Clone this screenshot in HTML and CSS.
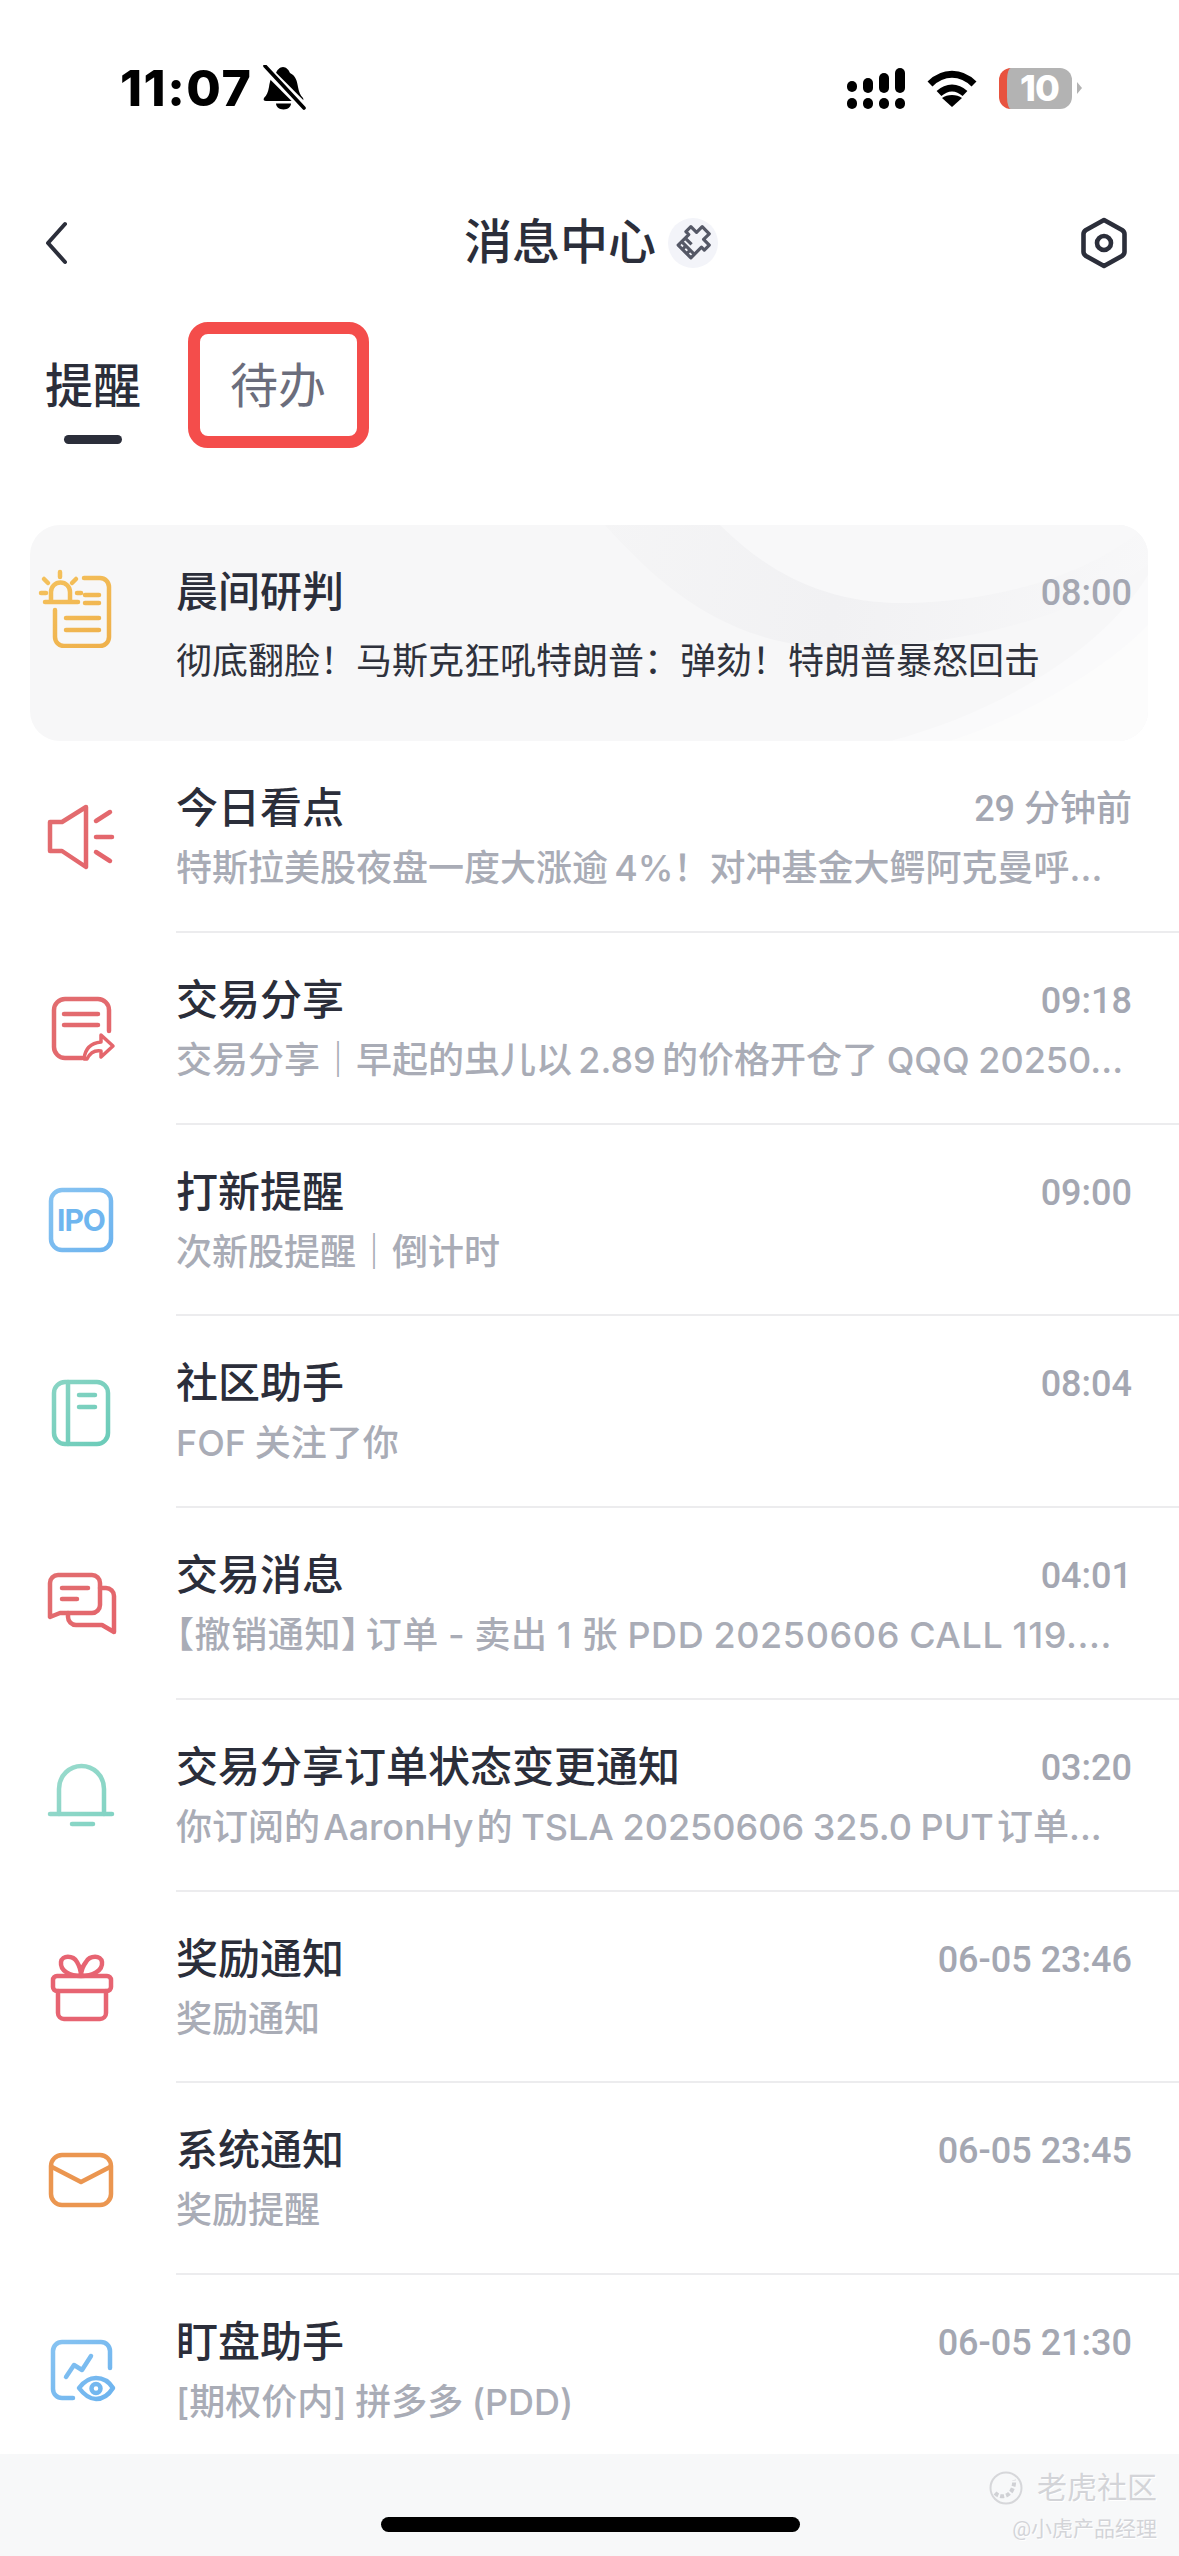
FILE: index.html
```html
<!DOCTYPE html>
<html lang="zh-CN">
<head>
<meta charset="utf-8">
<title>消息中心</title>
<link rel="stylesheet" href="styles.css">
</head>
<body>
<svg class="defs" width="0" height="0" aria-hidden="true">
  <defs>
    <linearGradient id="gAmber" gradientUnits="userSpaceOnUse" x1="0" y1="0" x2="60" y2="80"><stop offset="0" stop-color="#f5c35e"/><stop offset="1" stop-color="#efb14c"/></linearGradient>
    <linearGradient id="gRed" gradientUnits="userSpaceOnUse" x1="0" y1="0" x2="80" y2="80"><stop offset="0" stop-color="#e16f70"/><stop offset="1" stop-color="#e5636b"/></linearGradient>
    <linearGradient id="gBlue" gradientUnits="userSpaceOnUse" x1="0" y1="0" x2="80" y2="80"><stop offset="0" stop-color="#8cc6f2"/><stop offset="1" stop-color="#69b1ee"/></linearGradient>
    <linearGradient id="gTeal" gradientUnits="userSpaceOnUse" x1="0" y1="0" x2="80" y2="80"><stop offset="0" stop-color="#8ed6c6"/><stop offset="1" stop-color="#66cab7"/></linearGradient>
    <linearGradient id="gWave" gradientUnits="userSpaceOnUse" x1="560" y1="0" x2="1118" y2="100"><stop offset="0" stop-color="#f5f5f6"/><stop offset=".45" stop-color="#f1f1f3"/><stop offset="1" stop-color="#f8f8f9"/></linearGradient>
  </defs>
</svg>
<div class="app">
  <div class="status">
    <div class="status-left">
      <span class="clock">11:07</span>
      <svg class="bell-off" width="44" height="46" viewBox="0 0 44 46">
        <path d="M21 2c3 0 6 3 7 6 6 3 7 8 8 14 1 5 2 8 5 11 1 2 0 3-2 3H4c-2 0-3-1-2-3 3-3 4-6 5-11 1-6 2-11 7-14 1-3 4-6 7-6z" fill="#000"/>
        <path d="M14 38.500h15c0 3-3 6-7.500 6S14 41.500 14 38.500z" fill="#000"/>
        <path d="M1 1l40 40" stroke="#fff" stroke-width="9"/>
        <path d="M3 1l39 42" stroke="#000" stroke-width="3.600" stroke-linecap="round"/>
      </svg>
    </div>
    <div class="status-right">
      <svg width="58" height="41" viewBox="0 0 58 41" fill="#000">
        <rect x="0" y="13" width="10" height="11" rx="5"/><rect x="16" y="10" width="10" height="15" rx="5"/><rect x="32" y="5" width="10" height="20" rx="5"/><rect x="48" y="0" width="10" height="25" rx="5"/>
        <rect x="0" y="30" width="10" height="11" rx="5"/><rect x="16" y="30" width="10" height="11" rx="5"/><rect x="32" y="30" width="10" height="11" rx="5"/><rect x="48" y="30" width="10" height="11" rx="5"/>
      </svg>
      <svg class="wifi" width="50" height="37" viewBox="0 0 50 37">
        <path d="M3 14C16 1 34 1 47 14" fill="none" stroke="#000" stroke-width="7"/>
        <path d="M12 23.500C20 16 30 16 38 23.500" fill="none" stroke="#000" stroke-width="7"/>
        <path d="M25 37L15 28C20 24 30 24 35 28z" fill="#000"/>
      </svg>
      <div class="battery">10</div>
    </div>
  </div>

  <div class="nav">
    <svg class="nav-back" width="24" height="44" viewBox="0 0 24 44"><path d="M21 3L4 22l17 19" fill="none" stroke="#2b2e3a" stroke-width="4" stroke-linecap="round" stroke-linejoin="round"/></svg>
    <div class="nav-title">
      <span>消息中心</span>
      <span class="nav-logo">
        <svg width="50" height="50" viewBox="0 0 50 50">
          <g transform="rotate(45 25 25)" fill="none" stroke="#555866" stroke-width="3.200" stroke-linejoin="round">
            <path d="M20 7h10v8h8v7h-4v15H16V22h-4v-7h8z"/>
            <path d="M16 27h9M16 32h18M22 37v-5M28 37v-5"/>
          </g>
        </svg>
      </span>
    </div>
    <svg class="nav-gear" width="48" height="52" viewBox="0 0 48 52">
      <path d="M24 3l18 10c1.500 1 2.500 2 2.500 4v18c0 2-1 3-2.500 4L24 49 6 39c-1.500-1-2.500-2-2.500-4V17c0-2 1-3 2.500-4z" fill="none" stroke="#2b2e3a" stroke-width="4.600" stroke-linejoin="round"/>
      <circle cx="24" cy="26" r="7" fill="none" stroke="#2b2e3a" stroke-width="4.600"/>
    </svg>
  </div>

  <div class="tabs">
    <div class="tab tab-active">提醒</div>
    <div class="tab tab-marked">待办</div>
  </div>

  <div class="card">
    <svg class="card-art" viewBox="0 0 1118 216" preserveAspectRatio="none" aria-hidden="true">
      <path d="M575 0C620 50 690 120 800 122C930 124 1050 90 1118 40V0z" fill="url(#gWave)"/>
      <path d="M690 0C740 50 800 80 880 78C970 76 1060 50 1118 0z" fill="#f8f8f9"/>
      <path d="M860 216C960 190 1070 130 1118 50V216z" fill="#fafafb"/>
      <path d="M920 216C1000 190 1080 140 1118 100V216z" fill="#fcfcfc"/>
    </svg>
    <svg class="icon card-icon" width="80" height="80" viewBox="0 0 80 80">
      <g class="st amber">
        <path d="M49 10h16a9 9 0 0 1 9 9v50a9 9 0 0 1-9 9H29a9 9 0 0 1-9-9V42"/>
        <path d="M16 34V24a9.500 9.500 0 0 1 19 0v10M10 34h33M25 4v5M9 11l4 4M41 11l-4 4M6 25h5M42 25h4M50 27h14M50 35h14M31 50h33M31 62h33"/>
      </g>
    </svg>
    <div class="msg card-msg">
      <div class="msg-top"><span class="msg-title">晨间研判</span><span class="msg-time">08:00</span></div>
      <div class="msg-sub card-sub">彻底翻脸！马斯克狂吼特朗普：弹劾！特朗普暴怒回击</div>
    </div>
  </div>

  <div class="list">
    <div class="row">
      <svg class="icon" width="80" height="80" viewBox="0 0 80 80"><g class="st red"><path d="M10 25v29h12l24 16V10L22 25z"/><path d="M56 24l14-9M56 40h16M56 55l14 9"/></g></svg>
      <div class="msg">
        <div class="msg-top"><span class="msg-title">今日看点</span><span class="msg-time">29 分钟前</span></div>
        <div class="msg-sub">特斯拉美股夜盘一度大涨逾&#8201;4%！对冲基金大鳄阿克曼呼...</div>
      </div>
    </div>
    <div class="row">
      <svg class="icon" width="80" height="80" viewBox="0 0 80 80"><g class="st red"><path d="M42 69H25a11 11 0 0 1-11-11V21a11 11 0 0 1 11-11h33a11 11 0 0 1 11 11v21"/><path d="M24 25h34M24 36h34"/><path class="thin" d="M44 70c1-10 7-16 17-17v-7l12 11-12 11v-6c-6-1-11 2-14 8z"/></g></svg>
      <div class="msg">
        <div class="msg-top"><span class="msg-title">交易分享</span><span class="msg-time">09:18</span></div>
        <div class="msg-sub">交易分享｜早起的虫儿以&#8201;2.89&#8201;的价格开仓了 QQQ 20250...</div>
      </div>
    </div>
    <div class="row">
      <svg class="icon" width="80" height="80" viewBox="0 0 80 80"><g class="st blue"><rect x="11" y="10" width="60" height="60" rx="11"/></g><text class="ipo" x="41" y="51" text-anchor="middle">IPO</text></svg>
      <div class="msg">
        <div class="msg-top"><span class="msg-title">打新提醒</span><span class="msg-time">09:00</span></div>
        <div class="msg-sub">次新股提醒｜倒计时</div>
      </div>
    </div>
    <div class="row">
      <svg class="icon" width="80" height="80" viewBox="0 0 80 80"><g class="st teal"><rect x="14" y="10" width="54" height="62" rx="11"/><path d="M28 10v62M39 23h16M39 35h16"/></g></svg>
      <div class="msg">
        <div class="msg-top"><span class="msg-title">社区助手</span><span class="msg-time">08:04</span></div>
        <div class="msg-sub">FOF 关注了你</div>
      </div>
    </div>
    <div class="row">
      <svg class="icon" width="80" height="80" viewBox="0 0 80 80"><g class="st red"><path d="M10 53V19a8 8 0 0 1 8-8h34a8 8 0 0 1 8 8v22a8 8 0 0 1-8 8H20z"/><path d="M60 24h6a8 8 0 0 1 8 8v36l-12-7H36a8 8 0 0 1-8-8v-4"/><path d="M22 24h26M22 35h15"/></g></svg>
      <div class="msg">
        <div class="msg-top"><span class="msg-title">交易消息</span><span class="msg-time">04:01</span></div>
        <div class="msg-sub sub-wide"><span class="bracket">【</span>撤销通知<span class="bracket bracket-close">】</span>订单 - 卖出 1 张 PDD 20250606 CALL 119....</div>
      </div>
    </div>
    <div class="row">
      <svg class="icon" width="80" height="80" viewBox="0 0 80 80"><g class="st teal light"><path d="M19 58V33C19 19 30 10 41.500 10S64 19 64 33v25"/><path d="M10 58h62M32 68h21"/></g></svg>
      <div class="msg">
        <div class="msg-top"><span class="msg-title">交易分享订单状态变更通知</span><span class="msg-time">03:20</span></div>
        <div class="msg-sub">你订阅的&#8202;AaronHy&#8202;的 TSLA 20250606 325.0 PUT&#8202;订单...</div>
      </div>
    </div>
    <div class="row">
      <svg class="icon" width="80" height="80" viewBox="0 0 80 80"><g class="st pink"><rect x="13" y="29" width="58" height="15" rx="4"/><path d="M18 44v22a6 6 0 0 0 6 6h36a6 6 0 0 0 6-6V44"/><path d="M41 29c-11 0-21-5-20-14 1-7 12-7 16 0 3 5 4 10 4 14 0-4 1-9 5-14 4-7 15-7 16 0 1 9-10 14-21 14z"/></g></svg>
      <div class="msg">
        <div class="msg-top"><span class="msg-title">奖励通知</span><span class="msg-time">06-05 23:46</span></div>
        <div class="msg-sub">奖励通知</div>
      </div>
    </div>
    <div class="row">
      <svg class="icon" width="80" height="80" viewBox="0 0 80 80"><g class="st orange"><rect x="11" y="16" width="60" height="50" rx="11"/><path d="M12 28l29 15 29-15"/></g></svg>
      <div class="msg">
        <div class="msg-top"><span class="msg-title">系统通知</span><span class="msg-time">06-05 23:45</span></div>
        <div class="msg-sub">奖励提醒</div>
      </div>
    </div>
    <div class="row">
      <svg class="icon" width="80" height="80" viewBox="0 0 80 80"><g class="st blue"><path d="M70 37V20a9 9 0 0 0-9-9H22a9 9 0 0 0-9 9v38a9 9 0 0 0 9 9h11"/><path d="M26 46l8-12 8 5 9-14"/><path d="M39 57c6-8 11-10 17-10s12 2 17 10c-5 8-11 11-17 11s-11-3-17-11z"/><circle cx="56" cy="57.500" r="4.500"/></g></svg>
      <div class="msg">
        <div class="msg-top"><span class="msg-title">盯盘助手</span><span class="msg-time">06-05 21:30</span></div>
        <div class="msg-sub">[期权价内] 拼多多 (PDD)</div>
      </div>
    </div>
  </div>

  <div class="footer">
    <div class="watermark">
      <div class="wm-top">
        <svg width="34" height="34" viewBox="0 0 34 34"><circle cx="17" cy="17" r="15.500" fill="none" stroke="#d6d7da" stroke-width="2"/><path d="M6 22c6 6 14 3 17-3s2-10 2-10" fill="none" stroke="#d0d1d5" stroke-width="4" stroke-dasharray="4 2"/></svg>
        <span>老虎社区</span>
      </div>
      <div class="wm-bottom">@小虎产品经理</div>
    </div>
    <div class="home-bar"></div>
  </div>
</div>
</body>
</html>
```

FILE: styles.css
```css
* { box-sizing: border-box; }
html, body { margin: 0; padding: 0; background: #fff; }
body {
  width: 1179px;
  height: 2556px;
  overflow: hidden;
  font-family: Roboto, "Noto Sans CJK SC", sans-serif;
  color: #2b2e3a;
}
.defs { position: absolute; }
.app { display: flex; flex-direction: column; width: 1179px; height: 2556px; }

/* status bar */
.status {
  flex: none;
  height: 176px;
  display: flex;
  justify-content: space-between;
  align-items: center;
  padding: 0 107px 0 120px;
}
.status-left { display: flex; align-items: center; gap: 10px; }
.clock {
  font-family: Inter, sans-serif;
  font-weight: 800;
  font-size: 50px;
  line-height: 50px;
  letter-spacing: 1.5px;
  color: #000;
}
.bell-off { display: block; }
.status-right { display: flex; align-items: center; gap: 22px; }
.battery {
  position: relative;
  width: 73px;
  height: 41px;
  border-radius: 12px;
  background: #b3b3b3;
  border-left: 8px solid #e8533f;
  color: #fff;
  font-family: Inter, sans-serif;
  font-weight: 800;
  font-size: 36px;
  line-height: 41px;
  text-align: center;
  letter-spacing: -1px;
}
.battery::after {
  content: "";
  position: absolute;
  left: 70px;
  top: 14px;
  border-left: 5px solid #b3b3b3;
  border-top: 6px solid transparent;
  border-bottom: 6px solid transparent;
}

/* navigation */
.nav {
  flex: none;
  height: 134px;
  display: flex;
  align-items: center;
  justify-content: space-between;
  padding: 0 51px 0 44px;
}
.nav-title {
  display: flex;
  align-items: center;
  gap: 12px;
  font-size: 48px;
  font-weight: 500;
  line-height: 54px;
  margin-left: 34px;
}
.nav-logo {
  display: flex;
  width: 50px;
  height: 50px;
  border-radius: 50%;
  background: #f3f4f9;
}

/* tabs */
.tabs {
  flex: none;
  display: flex;
  gap: 89px;
  padding: 52px 0 0 45px;
  margin-bottom: 81px;
}
.tab {
  position: relative;
  height: 82px;
  font-size: 48px;
  line-height: 50px;
  color: #6b6d7c;
}
.tab-active { color: #2b2e3a; font-weight: 500; }
.tab-active::after {
  content: "";
  position: absolute;
  left: 19px;
  right: 19px;
  bottom: 0;
  height: 9px;
  border-radius: 5px;
  background: #2b2e3a;
}
.tab-marked::after {
  content: "";
  position: absolute;
  left: -42px;
  right: -43px;
  top: -40px;
  bottom: -4px;
  border: 12px solid #f44d4b;
  border-radius: 20px;
}

/* featured card */
.card {
  position: relative;
  flex: none;
  display: flex;
  height: 216px;
  margin: 0 31px 0 30px;
  border-radius: 30px;
  background: #f7f7f8;
  overflow: hidden;
}
.card-art { position: absolute; left: 0; top: 0; width: 100%; height: 100%; }

/* list */
.list { flex: 1; min-height: 0; overflow: hidden; }
.row { display: flex; height: 191.75px; }
.icon { flex: none; display: block; align-self: center; margin: 0 56px 0 40px; }
.msg {
  flex: 1;
  min-width: 0;
  padding: 43px 47px 0 0;
  border-bottom: 2px solid #ececee;
}
.msg-top { display: flex; justify-content: space-between; align-items: center; height: 50px; }
.msg-title { font-size: 42px; font-weight: 500; line-height: 50px; color: #2b2e3a; }
.msg-time { font-size: 36px; font-weight: 500; line-height: 50px; color: #a4a7b2; }
.msg-sub {
  margin-top: 9px;
  font-family: Inter, "Noto Sans CJK SC", sans-serif;
  font-size: 36px;
  font-weight: 500;
  line-height: 50px;
  word-spacing: -1px;
  color: #a9acb6;
  white-space: nowrap;
}
.sub-wide { letter-spacing: .6px; }
.bracket { font-feature-settings: "halt"; }
.bracket-close { margin-right: 6px; }

.card .card-icon { position: relative; align-self: flex-start; margin: 43px 61px 0 5px; }
.card .card-msg { position: relative; padding: 43px 16px 0 0; border: 0; }
.card .card-sub { margin-top: 18px; color: #2f323c; font-weight: 400; }

/* icon strokes */
.st { fill: none; stroke-width: 4.500; stroke-linecap: round; stroke-linejoin: round; }
.amber { stroke: url(#gAmber); }
.red { stroke: url(#gRed); }
.blue { stroke: url(#gBlue); }
.teal { stroke: url(#gTeal); }
.light { opacity: .85; }
.pink { stroke: #e76472; }
.orange { stroke: #eb9650; }
.thin { stroke-width: 3.500; }
.ipo { font-family: Inter, sans-serif; font-weight: 700; font-size: 30px; letter-spacing: -1px; fill: #6fb6ef; }

/* footer */
.footer { position: relative; flex: none; height: 102px; background: #f7f8f9; }
.home-bar {
  position: absolute;
  left: 381px;
  bottom: 24px;
  width: 419px;
  height: 15px;
  border-radius: 8px;
  background: #000;
}
.watermark {
  position: absolute;
  right: 22px;
  top: 16px;
  display: flex;
  flex-direction: column;
  align-items: flex-end;
  gap: 10px;
  color: #d3d4d8;
  text-shadow: 1px 1px 0 #fff;
}
.wm-top { display: flex; align-items: center; gap: 14px; font-size: 30px; line-height: 36px; }
.wm-bottom { font-size: 21px; line-height: 26px; }
```
